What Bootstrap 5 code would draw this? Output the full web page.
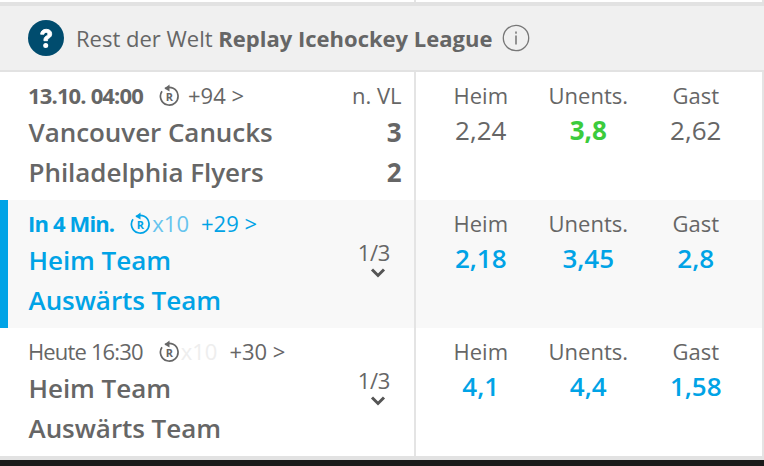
<!DOCTYPE html>
<html lang="de">
<head>
<meta charset="utf-8">
<title>Replay Icehockey League</title>
<link href="https://cdn.jsdelivr.net/npm/bootstrap@5.3.0/dist/css/bootstrap.min.css" rel="stylesheet">
<style>
html,body{margin:0;height:466px;overflow:hidden;background:#fff}
body{font-family:"Open Sans",sans-serif;color:#666;width:764px;font-size:22px}
.sheet{height:460px;display:flex;flex-direction:column;border-right:2px solid #e4e4e4}
.topstrip{height:6px;box-sizing:border-box;border-bottom:4px solid #e2e2e2;margin-right:-2px;display:flex}
.topstrip i{display:block;width:2px;height:2px;background:#e4e4e4;margin-left:414px}
.leaguehead{height:66px;box-sizing:border-box;background:#f0f0f0;border-bottom:2px solid #e2e2e2;padding-left:28px;margin-right:-2px;gap:12px;font-size:22px;line-height:1;color:#666;padding-bottom:1px}
.leaguehead b{font-weight:700}
.evrow{height:128px;display:flex}
.evrow.live{background:#f8f8f8;box-shadow:inset 8px 0 0 #00a3e6}
.evmain{width:414px;padding:11px 12.500px 0 28px;position:relative}
.evodds{flex:1;border-left:2px solid #e4e4e4;display:grid;grid-template-columns:repeat(3,107.5px);padding-left:11px;text-align:center;align-content:start}
.evodds>div{padding-top:11px}
.metaline{display:flex;align-items:center;height:24px;font-size:22px;line-height:24px}
.metaline strong{font-weight:700;letter-spacing:-.85px}
.metaline .stamp{letter-spacing:-.85px}
.replay{margin-left:16px;flex:none}
.plus{margin-left:8px}
.plus.after{margin-left:12px}
.xten{margin-left:1px}
.xten.soft{color:#66c4ee}
.xten.faint{color:#eee}
.team{display:flex;justify-content:space-between;font-size:26px;font-weight:600;line-height:40px;height:40px;color:#666;padding-left:.5px;letter-spacing:-.05px}
.team b{font-weight:700}
.metaline+.team{margin-top:5px}
.vl{margin-left:auto}
.live,.live .team{color:#00a3e6}
.pager{position:absolute;left:357px;top:39px;color:#666;line-height:26px;font-size:22px;width:34px;text-align:center;letter-spacing:-.3px}
.pager svg{display:block;margin:2px 0 0 13px}
.oddname{font-size:22px;line-height:24px;color:#666;display:block}
.oddval{font-size:26px;line-height:32px;display:block;margin-top:7px}
.oddval.idle{color:#666}
.oddval.win{color:#3ccb3c;font-weight:700}
.oddval.open{color:#00a3e6;font-weight:600}
.foot{height:6px;background:#1a1a1a}
.footgap{height:4px;background:#e2e2e2;margin-right:-2px}
</style>
</head>
<body>
<div class="sheet">
  <div class="topstrip"><i></i></div>
  <div class="leaguehead d-flex align-items-center">
    <svg width="36" height="36" viewBox="0 0 36 36" aria-hidden="true"><circle cx="18" cy="18" r="18" fill="#004c6e"/><path d="M12.6 14.2c.2-3.1 2.4-4.9 5.6-4.9 3.300 0 5.500 1.900 5.500 4.600 0 2-1 3.100-2.500 4.100-1.300.9-1.700 1.400-1.700 2.700h-3.600c-.1-2.200.6-3.400 2.100-4.400 1.300-.9 1.900-1.400 1.900-2.300 0-1-.7-1.600-1.800-1.600-1.200 0-2 .7-2.100 1.800z" fill="#fff" stroke="#fff" stroke-width=".9"/><circle cx="17.700" cy="25.500" r="2.500" fill="#fff"/></svg>
    <span>Rest der Welt <b>Replay Icehockey League</b></span>
    <svg width="28" height="28" viewBox="0 0 28 28" aria-hidden="true" style="margin-left:-2px"><circle cx="14" cy="14" r="12.700" fill="none" stroke="#777" stroke-width="1.300"/><rect x="13.100" y="11.500" width="1.800" height="9" fill="#888"/><rect x="13.100" y="7.500" width="1.800" height="2.200" fill="#888"/></svg>
  </div>

  <div class="evrow">
    <div class="evmain">
      <div class="metaline"><strong>13.10. 04:00</strong>
        <svg class="replay" width="21" height="24" viewBox="0 0 21 24" aria-hidden="true"><path d="M6 5.500a8.800 8.800 0 1 1-3 2.700" fill="none" stroke="currentColor" stroke-width="1.700"/><path d="M10.500 1.500 5.500 5.500l5 3z" fill="currentColor"/><text x="10.500" y="18" text-anchor="middle" font-size="11" font-weight="700" font-family="Open Sans" fill="currentColor">R</text></svg>
        <span class="plus">+94 &gt;</span><span class="vl">n. VL</span></div>
      <div class="team"><span>Vancouver Canucks</span><b>3</b></div>
      <div class="team"><span>Philadelphia Flyers</span><b>2</b></div>
    </div>
    <div class="evodds">
      <div><span class="oddname">Heim</span><span class="oddval idle">2,24</span></div>
      <div><span class="oddname">Unents.</span><span class="oddval win">3,8</span></div>
      <div><span class="oddname">Gast</span><span class="oddval idle">2,62</span></div>
    </div>
  </div>

  <div class="evrow live">
    <div class="evmain">
      <div class="metaline"><strong>In 4 Min.</strong>
        <svg class="replay" width="21" height="24" viewBox="0 0 21 24" aria-hidden="true"><path d="M6 5.500a8.800 8.800 0 1 1-3 2.700" fill="none" stroke="currentColor" stroke-width="1.700"/><path d="M10.500 1.500 5.500 5.500l5 3z" fill="currentColor"/><text x="10.500" y="18" text-anchor="middle" font-size="11" font-weight="700" font-family="Open Sans" fill="currentColor">R</text></svg>
        <span class="xten soft">x10</span><span class="plus after">+29 &gt;</span></div>
      <div class="team"><span>Heim Team</span></div>
      <div class="team"><span>Auswärts Team</span></div>
      <div class="pager">1/3<svg width="16" height="12" viewBox="0 0 16 12" aria-hidden="true"><path d="M2 2.500 8 8.500l6-6" fill="none" stroke="#555" stroke-width="3"/></svg></div>
    </div>
    <div class="evodds">
      <div><span class="oddname">Heim</span><span class="oddval open">2,18</span></div>
      <div><span class="oddname">Unents.</span><span class="oddval open">3,45</span></div>
      <div><span class="oddname">Gast</span><span class="oddval open">2,8</span></div>
    </div>
  </div>

  <div class="evrow">
    <div class="evmain">
      <div class="metaline"><span class="stamp">Heute 16:30</span>
        <svg class="replay" width="21" height="24" viewBox="0 0 21 24" aria-hidden="true"><path d="M6 5.500a8.800 8.800 0 1 1-3 2.700" fill="none" stroke="currentColor" stroke-width="1.700"/><path d="M10.500 1.500 5.500 5.500l5 3z" fill="currentColor"/><text x="10.500" y="18" text-anchor="middle" font-size="11" font-weight="700" font-family="Open Sans" fill="currentColor">R</text></svg>
        <span class="xten faint">x10</span><span class="plus after">+30 &gt;</span></div>
      <div class="team"><span>Heim Team</span></div>
      <div class="team"><span>Auswärts Team</span></div>
      <div class="pager">1/3<svg width="16" height="12" viewBox="0 0 16 12" aria-hidden="true"><path d="M2 2.500 8 8.500l6-6" fill="none" stroke="#555" stroke-width="3"/></svg></div>
    </div>
    <div class="evodds">
      <div><span class="oddname">Heim</span><span class="oddval open">4,1</span></div>
      <div><span class="oddname">Unents.</span><span class="oddval open">4,4</span></div>
      <div><span class="oddname">Gast</span><span class="oddval open">1,58</span></div>
    </div>
  </div>
  <div class="footgap"></div>
</div>
<div class="foot"></div>
<script src="https://cdn.jsdelivr.net/npm/bootstrap@5.3.0/dist/js/bootstrap.bundle.min.js"></script>
</body>
</html>
